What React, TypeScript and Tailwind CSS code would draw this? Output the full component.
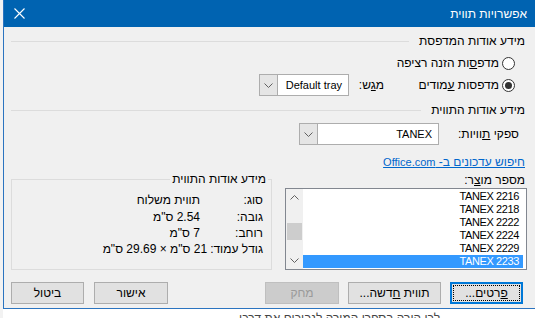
import React from 'react';

function Chevron({ up = false }: { up?: boolean }) {
  return (
    <svg width="9" height="5" viewBox="0 0 9 5">
      <path
        d={up ? 'M0.5 4.5 L4.5 0.5 L8.5 4.5' : 'M0.5 0.5 L4.5 4.5 L8.5 0.5'}
        stroke="#606060"
        strokeWidth="1"
        fill="none"
      />
    </svg>
  );
}

function Radio({ checked = false }: { checked?: boolean }) {
  return (
    <span className="w-[13px] h-[13px] shrink-0 rounded-full border border-[#333333] bg-white flex items-center justify-center">
      {checked && <span className="w-[7px] h-[7px] rounded-full bg-[#333333]" />}
    </span>
  );
}

function Combo({ value, className }: { value: string; className: string }) {
  return (
    <div className={`flex h-[22px] border border-[#adadad] bg-white text-[11px] ${className}`}>
      <div className="flex-1 flex items-center pr-[6px]">{value}</div>
      <div className="w-[18px] flex items-center justify-center bg-[#e5e5e5] border-r border-[#adadad]">
        <Chevron />
      </div>
    </div>
  );
}

function Section({ title }: { title: string }) {
  return (
    <div className="flex items-center h-[14px] mt-[7px] pr-[2px]">
      <span className="whitespace-nowrap">{title}</span>
      <div className="flex-1 h-px bg-[#dcdcdc] mr-[10px]" />
    </div>
  );
}

const items = ['TANEX 2216', 'TANEX 2218', 'TANEX 2222', 'TANEX 2224', 'TANEX 2229', 'TANEX 2233'];

const info = [
  { label: 'סוג:', value: 'תווית משלוח' },
  { label: 'גובה:', value: '2.54 ס"מ' },
  { label: 'רוחב:', value: '7 ס"מ' },
];

export default function App() {
  return (
    <div className="w-[535px] h-[318px] overflow-hidden bg-white flex font-['Liberation_Sans',sans-serif] text-[12px] text-black">
      <div className="w-[3px] shrink-0 bg-[#f2f2f2]" />
      <div className="flex-1 flex flex-col">
        <div dir="rtl" className="h-[309px] shrink-0 flex flex-col bg-[#f0f0f0] border-l border-b border-[#2b74c0]">
          {/* Title bar */}
          <div className="h-[27px] shrink-0 bg-[#0063b1] flex items-center justify-between pr-[8px] pl-[10px] text-white">
            <span>אפשרויות תווית</span>
            <svg width="11" height="11" viewBox="0 0 11 11">
              <path d="M0.5 0.5 L10.5 10.5 M10.5 0.5 L0.5 10.5" stroke="white" strokeWidth="1.1" />
            </svg>
          </div>

          <div className="flex-1 flex flex-col pl-[7px] pr-[8px]">
            <Section title="מידע אודות המדפסת" />

            <div className="mt-[7px] h-[16px] flex items-center gap-[3px] pr-[12px]">
              <Radio />
              <span>
                מדפ<u>ס</u>ות הזנה רציפה
              </span>
            </div>

            <div className="mt-[3px] h-[22px] flex items-center pr-[12px]">
              <div className="w-[121px] flex items-center gap-[3px]">
                <Radio checked />
                <span>
                  מדפסות <u>ע</u>מודים
                </span>
              </div>
              <span className="w-[35px] mr-[10px]">
                מ<u>ג</u>ש:
              </span>
              <Combo value="Default tray" className="w-[90px]" />
            </div>

            <Section title="מידע אודות התווית" />

            <div className="mt-[6px] h-[22px] flex items-center pr-[8px]">
              <span className="w-[80px]">
                ספקי <u>ת</u>וויות:
              </span>
              <Combo value="TANEX" className="w-[140px]" />
            </div>

            <div className="mt-[10px] h-[14px] leading-[14px] pr-[2px]">
              <span className="text-[#0066cc] underline">
                חיפוש עדכונים ב- <span className="text-[11px]">Office.com</span>
              </span>
            </div>

            <div className="mt-[3px] flex justify-between items-start">
              {/* Product number list */}
              <div className="w-[242px] flex flex-col">
                <div className="mt-[1px] h-[14px] leading-[14px] pr-[2px]">
                  מספר מו<u>צ</u>ר:
                </div>
                <div className="mt-[1px] h-[82px] flex border border-[#828790] bg-white text-[11px] tracking-[-0.4px]">
                  <div className="flex-1 pt-[1px] pr-[3px]">
                    {items.map((it, i) => (
                      <div
                        key={it}
                        className={`h-[13px] leading-[13px] pr-[4px] ${
                          i === items.length - 1 ? 'bg-[#3399ff] text-white' : ''
                        }`}
                      >
                        {it}
                      </div>
                    ))}
                  </div>
                  <div className="w-[17px] flex flex-col bg-[#f0f0f0]">
                    <div className="h-[17px] flex items-center justify-center">
                      <Chevron up />
                    </div>
                    <div className="flex-1">
                      <div className="mt-[17px] mx-[1px] h-[17px] bg-[#cdcdcd]" />
                    </div>
                    <div className="h-[17px] flex items-center justify-center">
                      <Chevron />
                    </div>
                  </div>
                </div>
              </div>

              {/* Label info group */}
              <fieldset className="w-[261px] h-[98px] border border-[#dcdcdc] px-[3px]">
                <legend className="px-[2px] h-[14px] leading-[14px]">מידע אודות התווית</legend>
                <div className="mt-[6px] flex flex-col pr-[5px]">
                  {info.map((r, i) => (
                    <div key={r.label} className={`h-[16px] flex items-center ${i === 1 ? 'mt-[1px]' : ''}`}>
                      <span className="w-[63px]">{r.label}</span>
                      <span>{r.value}</span>
                    </div>
                  ))}
                  <div className="h-[16px] flex items-center">
                    <span className="ml-[3px]">גודל עמוד:</span>
                    <span>21 ס"מ × 29.69 ס"מ</span>
                  </div>
                </div>
              </fieldset>
            </div>

            {/* Buttons */}
            <div className="mt-[12px] h-[22px] flex justify-between pr-[4px]">
              <div className="flex gap-[9px]">
                <button className="w-[73px] h-[22px] flex border-2 border-[#0078d7] bg-[#e1e1e1]">
                  <span className="flex-1 m-[1px] border border-dotted border-black flex items-center justify-center">
                    <span>
                      <u>פ</u>רטים...
                    </span>
                  </span>
                </button>
                <button className="w-[93px] h-[22px] border border-[#adadad] bg-[#e1e1e1]">
                  תווית <u>ח</u>דשה...
                </button>
                <button className="w-[74px] h-[22px] border border-[#bfbfbf] bg-[#cccccc] text-[#9a9a9a]">
                  מחק
                </button>
              </div>
              <div className="flex gap-[10px]">
                <button className="w-[74px] h-[22px] border border-[#adadad] bg-[#e1e1e1]">אישור</button>
                <button className="w-[73px] h-[22px] border border-[#adadad] bg-[#e1e1e1]">ביטול</button>
              </div>
            </div>
          </div>
        </div>

        {/* Document behind the dialog */}
        <div dir="rtl" className="flex-1 pr-[95px] pt-[2px] text-[12px] leading-[14px] text-[#444444] whitespace-nowrap">
          לכן הורה בספרו המורה לנבוכים את דרכי
        </div>
      </div>
    </div>
  );
}
